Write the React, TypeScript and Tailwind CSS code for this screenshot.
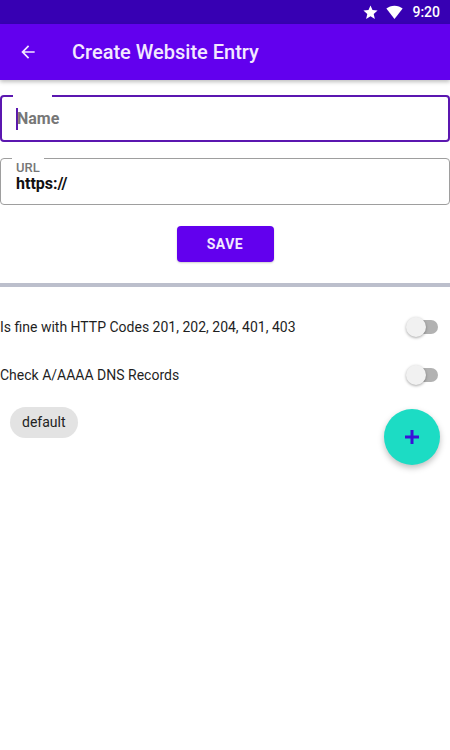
import React from "react";

function Toggle() {
  return (
    <div className="relative w-[32px] h-[20px] flex items-center">
      <div className="ml-[5px] w-[27px] h-[14px] rounded-full bg-[#b2b2b2]" />
      <div className="absolute left-0 top-0 w-[20px] h-[20px] rounded-full bg-[#f1f1f1] shadow-[0_1px_3px_rgba(0,0,0,0.35)]" />
    </div>
  );
}

function SwitchRow({ label }: { label: string }) {
  return (
    <div className="flex items-center justify-between h-[48px] pr-[12px]">
      <span className="text-[14px] text-[#1f1f1f]">{label}</span>
      <Toggle />
    </div>
  );
}

export default function App() {
  return (
    <div
      className="w-[450px] h-[750px] bg-white relative overflow-hidden"
      style={{ fontFamily: "Roboto, 'Liberation Sans', sans-serif" }}
    >
      {/* status bar */}
      <div className="h-[24px] bg-[#3700b3] flex items-center justify-end pr-[10px] gap-[7px] text-white">
        <svg width="17" height="17" viewBox="0 0 24 24" fill="white">
          <path d="M12 17.27L18.18 21l-1.64-7.03L22 9.24l-7.19-.61L12 2 9.19 8.63 2 9.24l5.46 4.73L5.82 21z" />
        </svg>
        <svg width="17" height="15" viewBox="0 0 24 20" fill="white">
          <path d="M12 19L0.5 4.5C3.5 2 7.5 0.5 12 0.5S20.5 2 23.5 4.5z" />
        </svg>
        <span className="text-[14px] font-medium ml-[2px]">9:20</span>
      </div>

      {/* app bar */}
      <div className="h-[56px] bg-[#6200ee] flex items-center shadow-[0_2px_4px_rgba(0,0,0,0.25)] relative z-10">
        <svg className="ml-[18px]" width="20" height="20" viewBox="0 0 24 24" fill="#f3e8ff">
          <path d="M20 11H7.83l5.59-5.59L12 4l-8 8 8 8 1.41-1.41L7.83 13H20v-2z" />
        </svg>
        <span className="ml-[34px] text-[20px] font-medium text-[#f3e8ff]">Create Website Entry</span>
      </div>

      {/* name field */}
      <div className="mt-[15px] relative h-[47px] border-2 border-[#5b17b0] rounded-[4px] flex items-center pl-[14px]">
        <div className="absolute -top-[2px] left-[11px] w-[39px] h-[2px] bg-white" />
        <div className="w-[2px] h-[22px] bg-[#5b17b0] -mr-[1px]" />
        <span className="text-[16px] font-bold text-[#777]">Name</span>
      </div>

      {/* url field */}
      <div className="mt-[16px] relative h-[47px] border border-[#9e9e9e] rounded-[4px] pl-[15px]">
        <div className="absolute -top-[1px] left-[11px] w-[32px] h-[1px] bg-white" />
        <div className="text-[13px] font-medium text-[#777] leading-[14px] mt-[2px]">URL</div>
        <div className="text-[16px] font-bold text-[#111] leading-[18px]">https://</div>
      </div>

      {/* save */}
      <div className="flex justify-center mt-[21px]">
        <button className="w-[97px] h-[36px] rounded-[4px] bg-[#6200ee] text-[#f3e8ff] text-[14px] font-bold tracking-[0.5px] shadow-[0_1px_2px_rgba(0,0,0,0.2)]">
          SAVE
        </button>
      </div>

      <div className="mt-[21px] h-[4px] bg-[#bcbfcc]" />

      <div className="mt-[16px]">
        <SwitchRow label="Is fine with HTTP Codes 201, 202, 204, 401, 403" />
        <SwitchRow label="Check A/AAAA DNS Records" />
      </div>

      <div className="mt-[8px] pl-[10px] flex">
        <span className="h-[31px] px-[12px] rounded-full bg-[#e3e3e3] text-[14px] text-[#222] flex items-center">
          default
        </span>
      </div>

      {/* fab */}
      <div className="absolute left-[384px] top-[409px] w-[56px] h-[56px] rounded-full bg-[#1cdcc4] shadow-[0_3px_6px_rgba(0,0,0,0.25)] flex items-center justify-center">
        <svg width="18" height="18" viewBox="0 0 18 18">
          <path d="M9 2v14M2 9h14" stroke="#3a10d8" strokeWidth="3" />
        </svg>
      </div>
    </div>
  );
}
